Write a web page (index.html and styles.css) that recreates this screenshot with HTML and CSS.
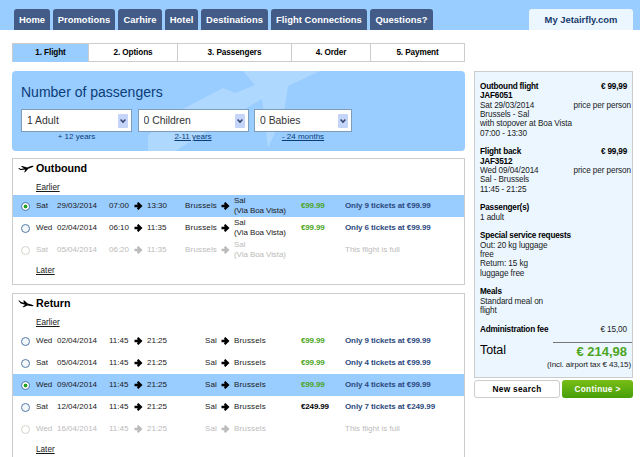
FILE: index.html
```
<!DOCTYPE html>
<html lang="en">
<head>
    <meta charset="UTF-8">
    <title>Jetairfly.com - Flight</title>
    <link rel="stylesheet" href="styles.css">
</head>
<body>
    <!-- Shared icons -->
    <svg class="defs" width="0" height="0">
        <symbol id="arrow" viewBox="0 0 9 8"><path d="M0.5 2.7H3.6L3 1.2 4.4 0.1 8.5 4 4.4 7.9 3 6.8 3.6 5.3H0.5Z"/></symbol>
        <symbol id="chevron" viewBox="0 0 10 14"><path d="M2.6 5.6L5 8.1 7.4 5.6" fill="none" stroke="#33466f" stroke-width="1.5"/></symbol>
        <symbol id="takeoff" viewBox="0 0 16 8"><path d="M0.2 3.3L1.1 3 3 3.9 6 3.2 2.9 1.5 4.3 1.1 9.2 2.4 13 1.1Q15.2 0.4 15.6 1.1 15.6 1.8 13.6 2.6L10.3 3.7 7.3 7.1 6.1 7.4 7.3 4.6 3.5 5.1 2.3 4.9Z"/></symbol>
        <symbol id="landing" viewBox="0 0 16 8"><path d="M0.3 0.5L1.3 0.5 3.2 2.1 6.1 2.7 5.2 0.4 6.4 0.5 9.7 3.5 13.5 4.4Q15.7 5 15.6 5.8 15 6.4 12.8 6L9.4 5.4 5.8 7.2 4.5 7.1 7.1 4.8 2.8 3.5Z"/></symbol>
    </svg>

    <div class="header">
        <div class="nav">
            <a class="tab tab-home">Home</a>
            <a class="tab tab-promo">Promotions</a>
            <a class="tab tab-car">Carhire</a>
            <a class="tab tab-hotel">Hotel</a>
            <a class="tab tab-dest">Destinations</a>
            <a class="tab tab-conn">Flight Connections</a>
            <a class="tab tab-faq">Questions?</a>
        </div>
        <a class="my-tab">My Jetairfly.com</a>
    </div>

    <div class="page">
        <div class="main">
            <div class="steps">
                <div class="step active">1. Flight</div>
                <div class="step">2. Options</div>
                <div class="step">3. Passengers</div>
                <div class="step">4. Order</div>
                <div class="step">5. Payment</div>
            </div>

            <div class="passengers">
                <svg class="watermark" viewBox="0 0 453 80" width="453" height="80"><path d="M136 64L163 42 211 17 223 22 243 14 231 0H308L276 15 272 42 256 77 250 28 163 80H136Z" fill="#afd8ff"/></svg>
                <h1>Number of passengers</h1>
                <div class="selects">
                    <div class="field">
                        <div class="select-box">
                            <select><option>1 Adult</option></select>
                            <span class="drop"><svg width="10" height="14"><use href="#chevron"/></svg></span>
                        </div>
                        <span class="hint">+ 12 years</span>
                    </div>
                    <div class="field">
                        <div class="select-box">
                            <select><option>0 Children</option></select>
                            <span class="drop"><svg width="10" height="14"><use href="#chevron"/></svg></span>
                        </div>
                        <a class="hint link">2-11 years</a>
                    </div>
                    <div class="field">
                        <div class="select-box">
                            <select><option>0 Babies</option></select>
                            <span class="drop"><svg width="10" height="14"><use href="#chevron"/></svg></span>
                        </div>
                        <a class="hint link">- 24 months</a>
                    </div>
                </div>
            </div>

            <!-- Outbound flights -->
            <div class="flights outbound">
                <h2><svg width="16" height="8"><use href="#takeoff"/></svg>Outbound</h2>
                <div class="more"><a class="link">Earlier</a></div>
                <div class="row selected">
                    <i class="radio on"></i><span>Sat</span><span>29/03/2014</span><span>07:00</span><svg class="arrow"><use href="#arrow"/></svg><span>13:30</span>
                    <span class="from">Brussels</span><svg class="arrow"><use href="#arrow"/></svg><span class="to">Sal<br>(Via Boa Vista)</span><b class="price">€99.99</b><b class="note">Only 9 tickets at €99.99</b>
                </div>
                <div class="row">
                    <i class="radio"></i><span>Wed</span><span>02/04/2014</span><span>06:10</span><svg class="arrow"><use href="#arrow"/></svg><span>11:35</span>
                    <span class="from">Brussels</span><svg class="arrow"><use href="#arrow"/></svg><span class="to">Sal<br>(Via Boa Vista)</span><b class="price">€99.99</b><b class="note">Only 6 tickets at €99.99</b>
                </div>
                <div class="row full">
                    <i class="radio"></i><span>Sat</span><span>05/04/2014</span><span>06:20</span><svg class="arrow"><use href="#arrow"/></svg><span>11:35</span>
                    <span class="from">Brussels</span><svg class="arrow"><use href="#arrow"/></svg><span class="to">Sal<br>(Via Boa Vista)</span><span></span><span class="full-note">This flight is full</span>
                </div>
                <div class="more"><a class="link">Later</a></div>
            </div>

            <!-- Return flights -->
            <div class="flights return">
                <h2><svg width="16" height="8"><use href="#landing"/></svg>Return</h2>
                <div class="more"><a class="link">Earlier</a></div>
                <div class="row">
                    <i class="radio"></i><span>Wed</span><span>02/04/2014</span><span>11:45</span><svg class="arrow"><use href="#arrow"/></svg><span>21:25</span>
                    <span class="from">Sal</span><svg class="arrow"><use href="#arrow"/></svg><span class="city">Brussels</span><b class="price">€99.99</b><b class="note">Only 9 tickets at €99.99</b>
                </div>
                <div class="row">
                    <i class="radio"></i><span>Sat</span><span>05/04/2014</span><span>11:45</span><svg class="arrow"><use href="#arrow"/></svg><span>21:25</span>
                    <span class="from">Sal</span><svg class="arrow"><use href="#arrow"/></svg><span class="city">Brussels</span><b class="price">€99.99</b><b class="note">Only 4 tickets at €99.99</b>
                </div>
                <div class="row selected">
                    <i class="radio on"></i><span>Wed</span><span>09/04/2014</span><span>11:45</span><svg class="arrow"><use href="#arrow"/></svg><span>21:25</span>
                    <span class="from">Sal</span><svg class="arrow"><use href="#arrow"/></svg><span class="city">Brussels</span><b class="price">€99.99</b><b class="note">Only 4 tickets at €99.99</b>
                </div>
                <div class="row">
                    <i class="radio"></i><span>Sat</span><span>12/04/2014</span><span>11:45</span><svg class="arrow"><use href="#arrow"/></svg><span>21:25</span>
                    <span class="from">Sal</span><svg class="arrow"><use href="#arrow"/></svg><span class="city">Brussels</span><b class="price high">€249.99</b><b class="note">Only 7 tickets at €249.99</b>
                </div>
                <div class="row full">
                    <i class="radio"></i><span>Wed</span><span>16/04/2014</span><span>11:45</span><svg class="arrow"><use href="#arrow"/></svg><span>21:25</span>
                    <span class="from">Sal</span><svg class="arrow"><use href="#arrow"/></svg><span class="city">Brussels</span><span></span><span class="full-note">This flight is full</span>
                </div>
                <div class="more"><a class="link">Later</a></div>
            </div>
        </div>

        <div class="sidebar">
            <div class="summary">
                <div class="block">
                    <div class="line"><b>Outbound flight</b><b class="amount">€ 99,99</b></div>
                    <div><b class="code">JAF6051</b></div>
                    <div class="line"><span>Sat 29/03/2014</span><span>price per person</span></div>
                    <div>Brussels - Sal</div>
                    <div>with stopover at Boa Vista</div>
                    <div>07:00 - 13:30</div>
                </div>
                <div class="block">
                    <div class="line"><b>Flight back</b><b class="amount">€ 99,99</b></div>
                    <div><b class="code">JAF3512</b></div>
                    <div class="line"><span>Wed 09/04/2014</span><span>price per person</span></div>
                    <div>Sal - Brussels</div>
                    <div>11:45 - 21:25</div>
                </div>
                <div class="block">
                    <b>Passenger(s)</b>
                    <div>1 adult</div>
                </div>
                <div class="block">
                    <b>Special service requests</b>
                    <div>Out: 20 kg luggage<br>free<br>Return: 15 kg<br>luggage free</div>
                </div>
                <div class="block">
                    <b>Meals</b>
                    <div>Standard meal on<br>flight</div>
                </div>
                <div class="line"><b>Administration fee</b><span class="amount">€ 15,00</span></div>
                <div class="total">
                    <span class="total-label">Total</span>
                    <b class="total-price">€ 214,98</b>
                </div>
                <div class="tax">(Incl. airport tax € 43,15)</div>
            </div>
            <div class="buttons">
                <button class="btn-search">New search</button>
                <button class="btn-continue">Continue &gt;</button>
            </div>
        </div>
    </div>
</body>
</html>
```
FILE: styles.css
```
* {
    box-sizing: border-box;
}

body {
    margin: 0;
    height: 457px;
    overflow: hidden;
    background: #fff;
    color: #1a1a1a;
    font-family: "Liberation Sans", Arial, sans-serif;
    font-size: 8.2px;
    line-height: 9.33px;
}

.defs {
    position: absolute;
}

.link {
    text-decoration: underline;
}

/* Header */
.header {
    display: flex;
    align-items: flex-end;
    justify-content: space-between;
    height: 30px;
    padding: 0 7px 0 14px;
    background: #99ccff;
}

.nav {
    display: flex;
    gap: 3px;
}

.tab, .my-tab {
    height: 21px;
    border-radius: 3px 3px 0 0;
    font-weight: bold;
    font-size: 9.4px;
    line-height: 21px;
    text-align: center;
    white-space: nowrap;
}

.tab {
    background: #425b87;
    color: #fff;
    letter-spacing: 0.05px;
}

.tab-home { width: 36px; }
.tab-promo { width: 62px; }
.tab-car { width: 44px; }
.tab-hotel { width: 33px; }
.tab-dest { width: 67px; }
.tab-conn { width: 96px; }
.tab-faq { width: 63px; }

.my-tab {
    width: 104px;
    background: #ebf6ff;
    color: #173a6b;
}

/* Layout */
.page {
    display: flex;
    align-items: flex-start;
    gap: 9px;
    padding: 13px 7px 0 12px;
}

.main {
    width: 453px;
}

/* Steps */
.steps {
    display: grid;
    grid-template-columns: 76px 89px 114px 79px 1fr;
    height: 19px;
    border: 1px solid #ccc;
}

.step {
    border-right: 1px solid #ccc;
    font-weight: bold;
    line-height: 18px;
    text-align: center;
    letter-spacing: -0.1px;
    color: #000;
}

.step:last-child {
    border-right: 0;
}

.step.active {
    background: #99ccff;
}

/* Passengers */
.passengers {
    position: relative;
    height: 80px;
    margin-top: 9px;
    padding: 12px 9px 0;
    border-radius: 4px;
    background: #99ccff;
    color: #0b3d78;
}

.watermark {
    position: absolute;
    top: 0;
    left: 0;
}

.passengers h1 {
    position: relative;
    margin: 0 0 8px;
    font-size: 14px;
    font-weight: normal;
    line-height: 18px;
}

.selects {
    position: relative;
    display: grid;
    grid-template-columns: 111px 111px 98px;
    gap: 5.5px;
}

.field {
    text-align: center;
}

.select-box {
    display: flex;
    align-items: center;
    height: 23px;
    padding-right: 3px;
    border: 1px solid #7f9db9;
    background: #fff;
}

.select-box select {
    flex: 1;
    min-width: 0;
    padding: 0 0 0 5px;
    border: 0;
    background: none;
    color: #333;
    font-family: inherit;
    font-size: 10.4px;
    appearance: none;
}

.drop {
    display: flex;
    height: 14px;
    border-radius: 1px;
    background: #c5d5fa;
}

.hint {
    display: block;
    font-size: 8px;
}

/* Flight lists */
.flights {
    margin-top: 7px;
    border: 1px solid #ccc;
}

.outbound {
    height: 127px;
}

.return {
    height: 164px;
    margin-top: 8px;
    border-bottom: 0;
}

.flights h2 {
    display: flex;
    align-items: center;
    gap: 2px;
    height: 19px;
    margin: 0;
    padding-left: 5px;
    color: #000;
    font-size: 10.7px;
    line-height: 19px;
}

.more {
    height: 17px;
    padding-left: 23px;
    line-height: 19px;
}

.row {
    display: grid;
    grid-template-columns: 15px 21px 52px 25px 13px 25px 45px 17px 67px 44px 1fr;
    align-items: center;
    height: 22px;
    padding-left: 8px;
    font-size: 8px;
    white-space: nowrap;
}

.row.selected {
    background: #99ccff;
}

.row.full {
    color: #bbb;
}

.radio {
    width: 9px;
    height: 9px;
    border: 1px solid #5179a8;
    border-radius: 50%;
    background: #f4f7fa;
}

.radio.on {
    background: radial-gradient(circle, #21a121 0 1.7px, #fff 2.2px);
}

.full .radio {
    border-color: #d4d4cb;
    background: #fff;
}

.arrow {
    width: 9px;
    height: 8px;
    margin-bottom: 1px;
    fill: #000;
}

.full .arrow {
    fill: #bbb;
}

.from {
    text-align: right;
}

.from + .arrow {
    justify-self: center;
}

.to {
    line-height: 10px;
    letter-spacing: -0.08px;
}

.from, .city {
    letter-spacing: 0.15px;
}

.price {
    color: #4da523;
    letter-spacing: -0.15px;
}

.price.high {
    color: #000;
}

.note {
    color: #2c4a7d;
    letter-spacing: -0.1px;
}

/* Booking summary */
.sidebar {
    width: 159px;
    padding-top: 28px;
}

.summary {
    height: 307px;
    padding: 10px 0 0 5px;
    border: 1px solid #ccc;
    background: #ebf6ff;
    letter-spacing: -0.1px;
}

.block {
    margin-bottom: 9.33px;
}

.summary b {
    color: #000;
    letter-spacing: -0.2px;
}

.line {
    display: flex;
    justify-content: space-between;
    padding-right: 1px;
    white-space: nowrap;
}

.amount {
    padding-right: 4px;
}

.total {
    display: flex;
    justify-content: space-between;
    margin-top: 8px;
    line-height: 17px;
}

.total-label {
    color: #000;
    font-size: 12.5px;
}

.summary .total-price {
    width: 79px;
    padding-right: 5px;
    border-top: 1px solid #777;
    color: #4da523;
    font-size: 13px;
    letter-spacing: 0;
    text-align: right;
}

.tax {
    padding-right: 1px;
    text-align: right;
    font-size: 8px;
}

.buttons {
    display: flex;
    gap: 2px;
    margin-top: 2px;
}

.buttons button {
    height: 18px;
    padding: 0;
    border-radius: 3px;
    font-family: inherit;
    font-size: 8.3px;
    font-weight: bold;
    letter-spacing: 0.3px;
}

.btn-search {
    width: 86px;
    border: 1px solid #ccc;
    background: #fff;
    color: #000;
}

.btn-continue {
    width: 71px;
    border: 0;
    background: linear-gradient(#79bd14, #459f0a);
    color: #fff;
}
```
